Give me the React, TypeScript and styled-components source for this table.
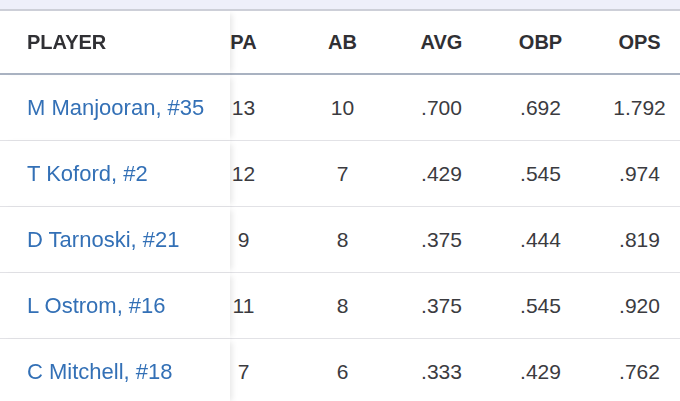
import { useLayoutEffect, useRef } from "react";
import styled, { createGlobalStyle } from "styled-components";

const GlobalStyle = createGlobalStyle`
  html, body {
    margin: 0;
    padding: 0;
    background: #ffffff;
    font-family: "Liberation Sans", Arial, sans-serif;
  }
`;

interface PlayerRow {
  name: string;
  pa: number;
  ab: number;
  avg: string;
  obp: string;
  ops: string;
}

const rows: PlayerRow[] = [
  { name: "M Manjooran, #35", pa: 13, ab: 10, avg: ".700", obp: ".692", ops: "1.792" },
  { name: "T Koford, #2", pa: 12, ab: 7, avg: ".429", obp: ".545", ops: ".974" },
  { name: "D Tarnoski, #21", pa: 9, ab: 8, avg: ".375", obp: ".444", ops: ".819" },
  { name: "L Ostrom, #16", pa: 11, ab: 8, avg: ".375", obp: ".545", ops: ".920" },
  { name: "C Mitchell, #18", pa: 7, ab: 6, avg: ".333", obp: ".429", ops: ".762" },
];

const Page = styled.div`
  width: 680px;
  height: 401px;
  overflow: hidden;
  background: #ffffff;
`;

const TopStrip = styled.div`
  height: 9px;
  background: #eeeffa;
  border-bottom: 2px solid #cdcfd8;
`;

const Scroller = styled.div`
  width: 680px;
  overflow-x: auto;
  scrollbar-width: none;
  &::-webkit-scrollbar {
    display: none;
  }
`;

const Table = styled.table`
  border-collapse: separate;
  border-spacing: 0;
  table-layout: fixed;
  width: 725px;
`;

const HeadCell = styled.th<{ $player?: boolean }>`
  height: 64px;
  padding: 0;
  box-sizing: border-box;
  font-size: 20px;
  font-weight: 700;
  color: #303034;
  text-align: ${(p) => (p.$player ? "left" : "center")};
  padding-left: ${(p) => (p.$player ? "27px" : "0")};
  border-bottom: 2px solid #a9b2c1;
  background: #ffffff;
  ${(p) =>
    p.$player &&
    `
    position: sticky;
    left: 0;
    z-index: 2;
    box-shadow: 5px 0 6px -3px rgba(0, 0, 0, 0.1);
  `}
`;

const Cell = styled.td<{ $last?: boolean }>`
  height: 65px;
  padding: 0;
  font-size: 21px;
  color: #3b3b3f;
  text-align: center;
  background: #ffffff;
  border-bottom: ${(p) => (p.$last ? "none" : "1px solid #e2e2e6")};
`;

const PlayerCell = styled(Cell)`
  text-align: left;
  padding-left: 27px;
  font-size: 22px;
  color: #3370b6;
  position: sticky;
  left: 0;
  z-index: 1;
  box-shadow: 5px 0 6px -3px rgba(0, 0, 0, 0.1);
  white-space: nowrap;
`;

const cols = ["PA", "AB", "AVG", "OBP", "OPS"];

export default function App() {
  const scrollRef = useRef<HTMLDivElement>(null);

  useLayoutEffect(() => {
    if (scrollRef.current) scrollRef.current.scrollLeft = 36;
  }, []);

  return (
    <>
      <GlobalStyle />
      <Page>
        <TopStrip />
        <Scroller ref={scrollRef}>
          <Table>
            <colgroup>
              <col style={{ width: 230 }} />
              {cols.map((c) => (
                <col key={c} style={{ width: 99 }} />
              ))}
            </colgroup>
            <thead>
              <tr>
                <HeadCell $player>PLAYER</HeadCell>
                {cols.map((c) => (
                  <HeadCell key={c}>{c}</HeadCell>
                ))}
              </tr>
            </thead>
            <tbody>
              {rows.map((r, i) => {
                const last = i === rows.length - 1;
                return (
                  <tr key={r.name}>
                    <PlayerCell $last={last}>{r.name}</PlayerCell>
                    <Cell $last={last}>{r.pa}</Cell>
                    <Cell $last={last}>{r.ab}</Cell>
                    <Cell $last={last}>{r.avg}</Cell>
                    <Cell $last={last}>{r.obp}</Cell>
                    <Cell $last={last}>{r.ops}</Cell>
                  </tr>
                );
              })}
            </tbody>
          </Table>
        </Scroller>
      </Page>
    </>
  );
}
